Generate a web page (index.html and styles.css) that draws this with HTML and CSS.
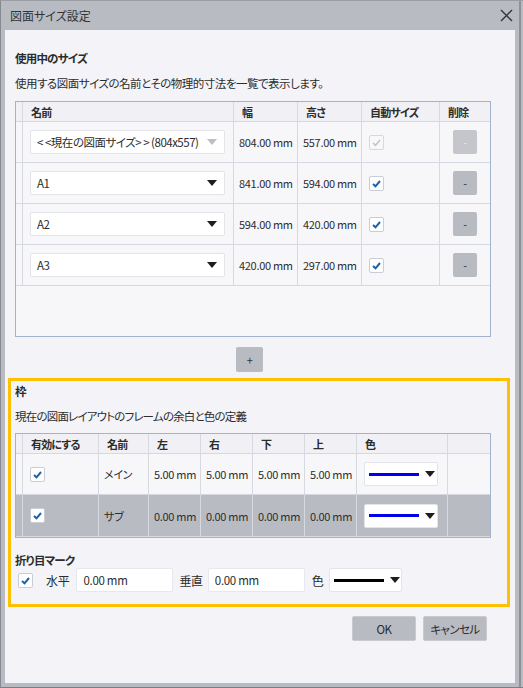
FILE: index.html
```html
<!DOCTYPE html>
<html lang="ja">
<head>
<meta charset="utf-8">
<title>図面サイズ設定</title>
<link rel="stylesheet" href="styles.css">
</head>
<body>
<div class="window">
  <div class="titlebar">
    <span class="title">図面サイズ設定</span>
    <svg class="close" width="13" height="13" viewBox="0 0 13 13"><path d="M1 1 L12 12 M12 1 L1 12" stroke="#3a3a3a" stroke-width="1.5" fill="none"/></svg>
  </div>
  <div class="content">
    <div class="sec1">
      <div class="heading">使用中のサイズ</div>
      <div class="desc">使用する図面サイズの名前とその物理的寸法を一覧で表示します。</div>
      <div class="grid grid1">
        <div class="c hd rh"></div>
        <div class="c hd">名前</div>
        <div class="c hd">幅</div>
        <div class="c hd">高さ</div>
        <div class="c hd">自動サイズ</div>
        <div class="c hd last">削除</div>

        <div class="c rh"></div>
        <div class="c namec"><div class="select disabled"><span>&lt; &lt;現在の図面サイズ&gt; &gt; (804x557)</span><i class="arrow"></i></div></div>
        <div class="c val">804.00 mm</div>
        <div class="c val">557.00 mm</div>
        <div class="c chkc"><span class="chk dis"><svg width="13" height="13" viewBox="0 0 13 13"><path d="M3 7 L5.5 9.3 L10 4" stroke="#c4c4c4" stroke-width="1.6" fill="none"/></svg></span></div>
        <div class="c btnc last"><span class="del dis">-</span></div>

        <div class="c rh"></div>
        <div class="c namec"><div class="select"><span>A1</span><i class="arrow"></i></div></div>
        <div class="c val">841.00 mm</div>
        <div class="c val">594.00 mm</div>
        <div class="c chkc"><span class="chk"><svg width="13" height="13" viewBox="0 0 13 13"><path d="M3 7 L5.5 9.3 L10 4" stroke="#1b62ab" stroke-width="2" fill="none"/></svg></span></div>
        <div class="c btnc last"><span class="del">-</span></div>

        <div class="c rh"></div>
        <div class="c namec"><div class="select"><span>A2</span><i class="arrow"></i></div></div>
        <div class="c val">594.00 mm</div>
        <div class="c val">420.00 mm</div>
        <div class="c chkc"><span class="chk"><svg width="13" height="13" viewBox="0 0 13 13"><path d="M3 7 L5.5 9.3 L10 4" stroke="#1b62ab" stroke-width="2" fill="none"/></svg></span></div>
        <div class="c btnc last"><span class="del">-</span></div>

        <div class="c rh"></div>
        <div class="c namec"><div class="select"><span>A3</span><i class="arrow"></i></div></div>
        <div class="c val">420.00 mm</div>
        <div class="c val">297.00 mm</div>
        <div class="c chkc"><span class="chk"><svg width="13" height="13" viewBox="0 0 13 13"><path d="M3 7 L5.5 9.3 L10 4" stroke="#1b62ab" stroke-width="2" fill="none"/></svg></span></div>
        <div class="c btnc last"><span class="del">-</span></div>
      </div>
      <div class="addrow"><span class="add">+</span></div>
    </div>

    <div class="frame">
      <div class="heading">枠</div>
      <div class="desc">現在の図面レイアウトのフレームの余白と色の定義</div>
      <div class="grid grid2">
        <div class="c hd rh"></div>
        <div class="c hd">有効にする</div>
        <div class="c hd">名前</div>
        <div class="c hd">左</div>
        <div class="c hd">右</div>
        <div class="c hd">下</div>
        <div class="c hd">上</div>
        <div class="c hd">色</div>
        <div class="c hd last"></div>

        <div class="c rh"></div>
        <div class="c chkc"><span class="chk"><svg width="13" height="13" viewBox="0 0 13 13"><path d="M3 7 L5.5 9.3 L10 4" stroke="#1b62ab" stroke-width="2" fill="none"/></svg></span></div>
        <div class="c val">メイン</div>
        <div class="c val">5.00 mm</div>
        <div class="c val">5.00 mm</div>
        <div class="c val">5.00 mm</div>
        <div class="c val">5.00 mm</div>
        <div class="c colc"><div class="colorsel"><i class="line blue"></i><i class="arrow"></i></div></div>
        <div class="c last"></div>

        <div class="c rh sel"></div>
        <div class="c chkc sel"><span class="chk"><svg width="13" height="13" viewBox="0 0 13 13"><path d="M3 7 L5.5 9.3 L10 4" stroke="#1b62ab" stroke-width="2" fill="none"/></svg></span></div>
        <div class="c val sel">サブ</div>
        <div class="c val sel">0.00 mm</div>
        <div class="c val sel">0.00 mm</div>
        <div class="c val sel">0.00 mm</div>
        <div class="c val sel">0.00 mm</div>
        <div class="c colc sel"><div class="colorsel"><i class="line blue"></i><i class="arrow"></i></div></div>
        <div class="c last sel"></div>
      </div>
      <div class="heading fold">折り目マーク</div>
      <div class="foldrow">
        <span class="chk"><svg width="13" height="13" viewBox="0 0 13 13"><path d="M3 7 L5.5 9.3 L10 4" stroke="#1b62ab" stroke-width="2" fill="none"/></svg></span>
        <span class="lbl l1">水平</span>
        <span class="input">0.00 mm</span>
        <span class="lbl l2">垂直</span>
        <span class="input">0.00 mm</span>
        <span class="lbl l3">色</span>
        <div class="colorsel wide"><i class="line black"></i><i class="arrow"></i></div>
      </div>
    </div>

    <div class="buttons">
      <span class="btn">OK</span>
      <span class="btn">キャンセル</span>
    </div>
  </div>
</div>
</body>
</html>
```

FILE: styles.css
```css
* { box-sizing: border-box; }
html, body { margin: 0; padding: 0; }
body {
  width: 523px;
  height: 688px;
  overflow: hidden;
  font-family: "Noto Sans CJK JP", "Noto Sans", sans-serif;
  font-size: 11.5px;
  letter-spacing: -0.5px;
  color: #2c2c2c;
  font-feature-settings: "palt";
}
.window {
  width: 523px;
  height: 688px;
  border-left: 1px solid #878991;
  border-top: 1px solid #9c9ea6;
  border-bottom: 1px solid #7d7f87;
  background: linear-gradient(to left, #b9bbc3 0 2px, #8f9199 2px 4px, #b9bbc3 4px);
  display: flex;
  flex-direction: column;
}
.titlebar {
  height: 29px;
  display: flex;
  align-items: center;
  justify-content: space-between;
  padding: 0 10px 0 9px;
}
.title { font-size: 12px; letter-spacing: 0; color: #333; }
.close { display: block; margin-top: -1px; }
.content {
  flex: 1;
  margin: 0 8px 4px 4px;
  background: #f3f3f8;
  display: flex;
  flex-direction: column;
}
.sec1 { padding: 19px 0 0 10px; }
.heading {
  font-weight: bold;
  line-height: 18px;
  height: 18px;
  font-size: 11.5px;
  letter-spacing: -0.8px;
}
.desc { margin-top: 7px; line-height: 18px; height: 18px; }
.frame .desc { letter-spacing: -0.8px; }

.grid {
  display: grid;
  width: 476px;
  border: 1px solid #a3b3cb;
  background: #f7f7fa;
  align-content: start;
  margin-top: 8px;
}
.grid1 {
  grid-template-columns: 7px 211px 64px 64px 78px 50px;
  grid-template-rows: 20px 41px 41px 41px 41px;
  height: 236px;
  margin-top: 9px;
}
.grid2 {
  grid-template-columns: 7px 76px 50px 52px 52px 52px 52px 91px 42px;
  grid-template-rows: 20px 41px 42px;
  height: 105px;
}
.c {
  border-right: 1px solid #d6d9e1;
  border-bottom: 1px solid #d6d9e1;
  display: flex;
  align-items: center;
  min-width: 0;
  white-space: nowrap;
}
.c.last { border-right: none; }
.hd {
  background: #f1f1f5;
  font-weight: bold;
  font-size: 11px;
  letter-spacing: -0.8px;
  padding-left: 8px;
  line-height: 18px;
}
.hd.rh { padding: 0; }
.val { padding-left: 5px; font-size: 11px; letter-spacing: -0.3px; }
.namec { padding-left: 7px; }
.chkc { padding-left: 7px; }
.btnc { justify-content: center; }
.colc { padding-left: 7px; }
.sel { background: #b9bbc3; }

.select {
  width: 195px;
  height: 24px;
  background: #fff;
  border: 1px solid #e2e4ea;
  border-radius: 2px;
  display: flex;
  align-items: center;
  justify-content: space-between;
  padding: 0 7px 0 6px;
  font-size: 11.5px;
  letter-spacing: -0.5px;
}
.arrow {
  display: block;
  width: 0;
  height: 0;
  border-left: 5px solid transparent;
  border-right: 5px solid transparent;
  border-top: 6px solid #1e1e1e;
}
.select.disabled .arrow { border-top-color: #bdbdc2; }

.chk {
  width: 15px;
  height: 15px;
  background: #fff;
  border: 1px solid #c9cdd6;
  border-radius: 2px;
  display: flex;
  align-items: center;
  justify-content: center;
  flex: none;
}
.chk svg { display: block; }
.chk.dis { background: #f8f8f9; border-color: #d6d8de; }

.del {
  width: 24px;
  height: 24px;
  border-radius: 2px;
  background: #b9bbc3;
  display: flex;
  align-items: center;
  justify-content: center;
  font-size: 11px;
  color: #333;
}
.del.dis { background: #c4c6cc; color: #e6e6e8; }

.addrow { margin-top: 10px; padding-left: 221px; height: 25px; }
.add {
  width: 27px;
  height: 25px;
  border-radius: 2px;
  background: #b9bbc3;
  display: flex;
  align-items: center;
  justify-content: center;
  font-size: 11px;
  color: #333;
}

.frame {
  margin: 6px 5px 0 3px;
  height: 229px;
  border: 3px solid #ffc000;
  padding: 1px 0 0 4px;
}
.colorsel {
  width: 74px;
  height: 24px;
  background: #fff;
  border: 1px solid #e2e4ea;
  border-radius: 2px;
  display: flex;
  align-items: center;
  padding: 0 0 0 4px;
  gap: 6px;
}
.colorsel.wide { width: 73px; }
.line { display: block; width: 50px; height: 3px; }
.line.blue { background: #0000ee; }
.line.black { background: #000; }

.heading.fold { margin-top: 14px; height: 16px; line-height: 16px; }
.foldrow {
  display: flex;
  align-items: center;
  height: 24px;
  padding-left: 3px;
}
.lbl { font-size: 12px; letter-spacing: -0.3px; }
.l1 { margin-left: 13px; margin-right: 7px; }
.l2 { margin-left: 6px; margin-right: 5px; }
.l3 { margin-left: 7px; margin-right: 5px; }
.input {
  width: 97px;
  height: 24px;
  background: #fff;
  border: 1px solid #e6e8ed;
  border-radius: 2px;
  display: flex;
  align-items: center;
  padding-left: 6px;
  font-size: 11.5px;
  letter-spacing: -0.3px;
}

.buttons {
  display: flex;
  justify-content: flex-end;
  gap: 7px;
  margin: 9px 28px 0 0;
}
.btn {
  width: 64px;
  height: 25px;
  border-radius: 2px;
  background: #b9bbc3;
  border: 1px solid #c8cad0;
  display: flex;
  align-items: center;
  justify-content: center;
  font-size: 11.5px;
  letter-spacing: -0.6px;
  color: #2a2a2a;
}
```
